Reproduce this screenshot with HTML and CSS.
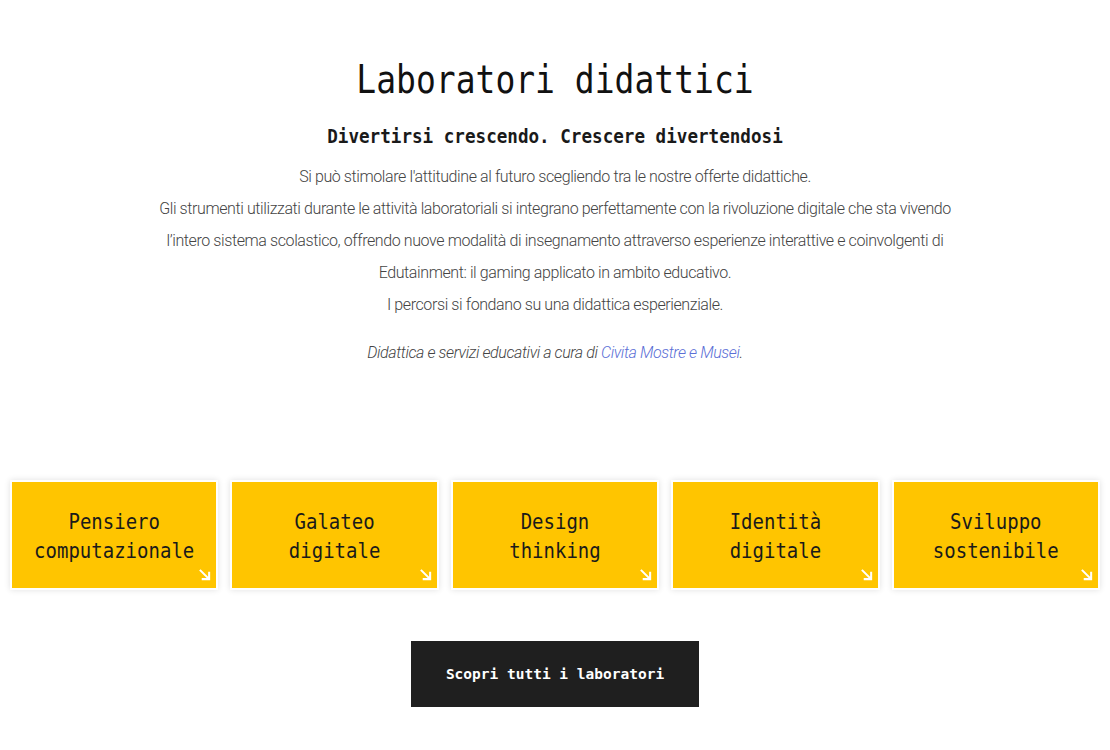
FILE: index.html
```html
<!DOCTYPE html>
<html lang="it">
<head>
    <meta charset="UTF-8">
    <title>Laboratori didattici</title>
    <link rel="stylesheet" href="styles.css">
</head>
<body>
    <section class="labs">
        <div class="labs-intro">
            <h1 class="labs-title">Laboratori didattici</h1>
            <h2 class="labs-subtitle">Divertirsi crescendo. Crescere divertendosi</h2>
            <p class="labs-text">
                Si può stimolare l'attitudine al futuro scegliendo tra le nostre offerte didattiche.<br>
                Gli strumenti utilizzati durante le attività laboratoriali si integrano perfettamente con la rivoluzione digitale che sta vivendo l’intero sistema scolastico, offrendo nuove modalità di insegnamento attraverso esperienze interattive e coinvolgenti di Edutainment: il gaming applicato in ambito educativo.<br>
                I percorsi si fondano su una didattica esperienziale.
            </p>
            <p class="labs-credits">Didattica e servizi educativi a cura di <a href="#">Civita Mostre e Musei</a>.</p>
        </div>

        <div class="labs-grid">
            <a class="lab-card" href="#">
                <span class="lab-name">Pensiero computazionale</span>
                <svg class="lab-arrow" viewBox="0 0 14 14"><path d="M2 2 L12 12 M12 4 V12 H4"/></svg>
            </a>
            <a class="lab-card" href="#">
                <span class="lab-name">Galateo<br>digitale</span>
                <svg class="lab-arrow" viewBox="0 0 14 14"><path d="M2 2 L12 12 M12 4 V12 H4"/></svg>
            </a>
            <a class="lab-card" href="#">
                <span class="lab-name">Design<br>thinking</span>
                <svg class="lab-arrow" viewBox="0 0 14 14"><path d="M2 2 L12 12 M12 4 V12 H4"/></svg>
            </a>
            <a class="lab-card" href="#">
                <span class="lab-name">Identità<br>digitale</span>
                <svg class="lab-arrow" viewBox="0 0 14 14"><path d="M2 2 L12 12 M12 4 V12 H4"/></svg>
            </a>
            <a class="lab-card" href="#">
                <span class="lab-name">Sviluppo<br>sostenibile</span>
                <svg class="lab-arrow" viewBox="0 0 14 14"><path d="M2 2 L12 12 M12 4 V12 H4"/></svg>
            </a>
        </div>

        <div class="labs-actions">
            <a class="btn-dark" href="#">Scopri tutti i laboratori</a>
        </div>
    </section>
</body>
</html>
```

FILE: styles.css
```css
body {
    margin: 0;
    background-color: #fff;
    font-family: Roboto, "Liberation Sans", sans-serif;
    color: #444;
}

.labs {
    padding: 54px 10px 40px;
}

.labs-intro {
    max-width: 820px;
    margin: 0 auto;
    text-align: center;
}

.labs-title {
    margin: 0;
    font-family: "DejaVu Sans Mono", "Liberation Mono", monospace;
    font-size: 33px;
    font-weight: normal;
    line-height: 52px;
    color: #111;
    transform: scaleY(1.2);
}

.labs-subtitle {
    margin: 18px 0 13px;
    font-family: "DejaVu Sans Mono", "Liberation Mono", monospace;
    font-size: 17.6px;
    font-weight: bold;
    line-height: 24px;
    color: #1a1a1a;
    transform: scaleY(1.12);
}

.labs-text {
    margin: 0;
    font-size: 16px;
    font-weight: 300;
    line-height: 32px;
    letter-spacing: -0.4px;
    color: #444;
}

.labs-credits {
    margin: 16px 0 0;
    font-size: 16px;
    font-weight: 300;
    font-style: italic;
    line-height: 32px;
    letter-spacing: -0.4px;
    color: #444;
}

.labs-credits a {
    color: #5b6fd6;
    text-decoration: none;
}

.labs-grid {
    display: grid;
    grid-template-columns: repeat(5, 1fr);
    gap: 12px;
    margin-top: 111px;
}

.lab-card {
    position: relative;
    display: flex;
    align-items: center;
    justify-content: center;
    height: 106px;
    background-color: #ffc500;
    border: 2px solid #fff;
    box-shadow: 0 0 6px rgba(0,0,0,0.12);
    text-decoration: none;
    text-align: center;
}

/* mono face is stretched a bit to get the tall, narrow look */
.lab-name {
    display: inline-block;
    font-family: "DejaVu Sans Mono", "Liberation Mono", monospace;
    font-size: 19px;
    line-height: 24.5px;
    color: #1a1a1a;
    transform: scaleY(1.15);
}

.lab-arrow {
    position: absolute;
    right: 5px;
    bottom: 7px;
    width: 13px;
    height: 13px;
    fill: none;
    stroke: #fff;
    stroke-width: 2.2;
}

.labs-actions {
    display: flex;
    justify-content: center;
    margin-top: 51px;
}

.btn-dark {
    display: inline-block;
    width: 288px;
    padding: 22px 0;
    background-color: #1f1f1f;
    color: #fff;
    font-family: "DejaVu Sans Mono", "Liberation Mono", monospace;
    font-size: 14.5px;
    font-weight: bold;
    line-height: 22px;
    text-align: center;
    text-decoration: none;
}
```
